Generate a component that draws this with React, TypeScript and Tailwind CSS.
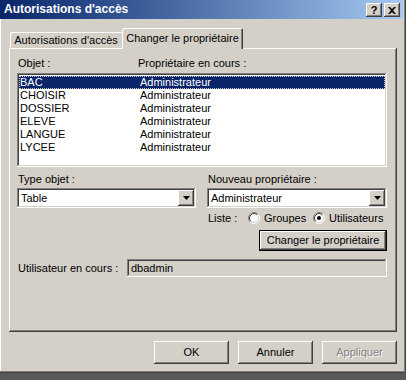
import { ReactNode } from 'react'

const raised =
  'shadow-[inset_-1px_-1px_#404040,inset_1px_1px_#ffffff,inset_-2px_-2px_#808080,inset_2px_2px_#d4d0c8]'
const sunken =
  'shadow-[inset_-1px_-1px_#ffffff,inset_1px_1px_#808080,inset_-2px_-2px_#d4d0c8,inset_2px_2px_#404040]'

const rows = ['BAC', 'CHOISIR', 'DOSSIER', 'ELEVE', 'LANGUE', 'LYCEE']

function DropArrow(): JSX.Element {
  return (
    <div className={`flex h-[16px] w-[16px] items-center justify-center bg-[#d4d0c8] ${raised}`}>
      <svg width="7" height="4" viewBox="0 0 7 4">
        <path d="M0 0h7L3.5 4z" fill="#000" />
      </svg>
    </div>
  )
}

function Combo({ value, width }: { value: string; width: string }): JSX.Element {
  return (
    <div className={`flex h-[20px] ${width} items-center justify-between bg-white p-[2px] ${sunken}`}>
      <span className="pl-[2px]">{value}</span>
      <DropArrow />
    </div>
  )
}

function Radio({ checked }: { checked: boolean }): JSX.Element {
  return (
    <svg width="12" height="12" viewBox="0 0 12 12">
      <circle cx="6" cy="6" r="5" fill="#fff" />
      <path d="M2.11 9.89A5.5 5.5 0 0 1 9.89 2.11" stroke="#808080" fill="none" />
      <path d="M9.89 2.11A5.5 5.5 0 0 1 2.11 9.89" stroke="#fff" fill="none" />
      <path d="M2.82 9.18A4.5 4.5 0 0 1 9.18 2.82" stroke="#404040" fill="none" />
      <path d="M9.18 2.82A4.5 4.5 0 0 1 2.82 9.18" stroke="#d4d0c8" fill="none" />
      {checked ? <circle cx="6" cy="6" r="2" fill="#000" /> : null}
    </svg>
  )
}

function Button({ children, disabled }: { children: ReactNode; disabled?: boolean }): JSX.Element {
  return (
    <div
      className={`flex h-[23px] w-[75px] items-center justify-center bg-[#d4d0c8] ${raised} ${
        disabled ? 'text-[#808080] [text-shadow:1px_1px_0_#ffffff]' : 'text-black'
      }`}
    >
      {children}
    </div>
  )
}

function App(): JSX.Element {
  return (
    <div className="h-[380px] w-[406px] bg-[#585858] font-['Liberation_Sans',Arial,sans-serif] text-[11px] leading-[13px] text-black">
      <div className="flex h-[373px] w-[406px] flex-col bg-[#d4d0c8] shadow-[inset_-1px_-1px_#404040,inset_-2px_-2px_#808080,inset_1px_0_#ffffff]">
        {/* barre de titre */}
        <div className="flex h-[19px] w-[403px] items-center justify-between bg-linear-to-r from-[#0a246a] to-[#a6caf0] pl-[4px] pr-[3px]">
          <span className="text-[12px] font-bold text-white">Autorisations d'accès</span>
          <div className="flex gap-[2px] pt-[1px]">
            <div className={`flex h-[14px] w-[16px] items-center justify-center bg-[#d4d0c8] text-[11px] font-bold ${raised}`}>
              ?
            </div>
            <div className={`flex h-[14px] w-[16px] items-center justify-center bg-[#d4d0c8] ${raised}`}>
              <svg width="8" height="7" viewBox="0 0 8 7">
                <path d="M0 0h2l2 2 2-2h2L5 3.5 8 7H6L4 5 2 7H0l3-3.5z" fill="#000" />
              </svg>
            </div>
          </div>
        </div>

        {/* onglets */}
        <div className="relative z-10 mt-[9px] flex h-[21px] items-end pl-[10px]">
          <div className="mb-[1px] flex h-[16px] w-[112px] items-center justify-center rounded-tl-[2px] bg-[#d4d0c8] pt-[1px] shadow-[inset_1px_1px_#ffffff]">
            Autorisations d'accès
          </div>
          <div className="flex h-[21px] w-[121px] items-start justify-center rounded-tl-[2px] rounded-tr-[2px] bg-[#d4d0c8] pt-[4px] shadow-[inset_1px_1px_#ffffff,inset_-1px_0_#404040,inset_-2px_0_#808080]">
            Changer le propriétaire
          </div>
        </div>

        {/* panneau */}
        <div className="-mt-[1px] ml-[9px] flex h-[284px] w-[388px] flex-col pl-[8px] pt-[9px] shadow-[inset_-1px_-1px_#404040,inset_1px_1px_#ffffff,inset_-2px_-2px_#808080]">
          <div className="flex h-[13px]">
            <span className="w-[121px] pl-[1px]">Objet :</span>
            <span>Propriétaire en cours :</span>
          </div>

          <div className={`mt-[3px] h-[94px] w-[370px] bg-white px-[2px] pt-[3px] ${sunken}`}>
            {rows.map((name, i) => (
              <div
                key={name}
                className={`flex h-[13px] pl-[1px] ${
                  i === 0
                    ? 'bg-[#0a246a] text-white outline-1 -outline-offset-1 outline-dotted outline-[#c8c8c8]'
                    : ''
                }`}
              >
                <span className="w-[120px]">{name}</span>
                <span>Administrateur</span>
              </div>
            ))}
          </div>

          <div className="mt-[6px] flex h-[13px]">
            <span className="w-[190px] pl-[1px]">Type objet :</span>
            <span className="pl-[1px]">Nouveau propriétaire :</span>
          </div>

          <div className="mt-[2px] flex gap-[11px]">
            <Combo value="Table" width="w-[179px]" />
            <Combo value="Administrateur" width="w-[180px]" />
          </div>

          <div className="mt-[3px] flex h-[14px] items-center pl-[191px]">
            <span className="w-[40px]">Liste :</span>
            <Radio checked={false} />
            <span className="ml-[4px] w-[49px]">Groupes</span>
            <Radio checked />
            <span className="ml-[4px]">Utilisateurs</span>
          </div>

          <div className="mt-[5px] flex w-[370px] justify-end">
            <div
              className={`flex h-[21px] w-[128px] items-center justify-center bg-[#d4d0c8] shadow-[inset_-1px_-1px_#000000,inset_1px_1px_#000000,inset_-2px_-2px_#404040,inset_2px_2px_#ffffff,inset_-3px_-3px_#808080]`}
            >
              Changer le propriétaire
            </div>
          </div>

          <div className="mt-[8px] flex w-[370px] items-center">
            <span className="w-[110px] pl-[1px]">Utilisateur en cours :</span>
            <div className={`flex h-[18px] w-[260px] items-center bg-[#d4d0c8] pl-[4px] ${sunken}`}>dbadmin</div>
          </div>
        </div>

        {/* boutons */}
        <div className="mt-[9px] flex w-[397px] justify-end gap-[9px]">
          <Button>OK</Button>
          <Button>Annuler</Button>
          <Button disabled>Appliquer</Button>
        </div>
      </div>
    </div>
  )
}

export default App
